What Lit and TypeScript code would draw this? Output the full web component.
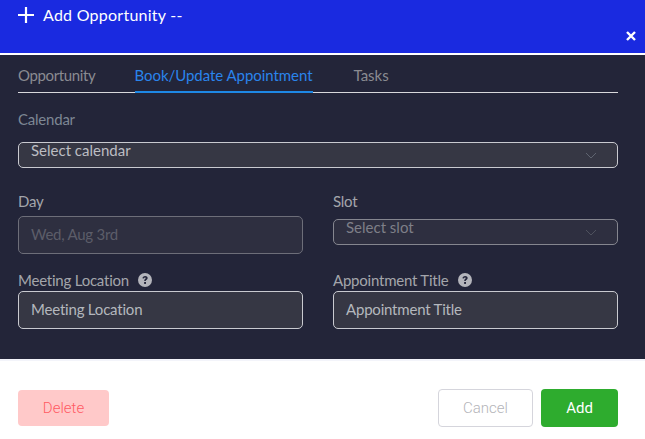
import { LitElement, html, css } from 'lit';
import { customElement } from 'lit/decorators.js';

const chevron = html`<svg class="chevron" width="12" height="7" viewBox="0 0 12 7" fill="none"><path d="M1 1l5 5 5-5" stroke="currentColor" stroke-width="1"/></svg>`;

const help = html`<svg class="help" width="14" height="14" viewBox="0 0 14 14"><circle cx="7" cy="7" r="7" fill="#b4b5bb"/><path d="M4.4 5.3c.1-1.5 1.2-2.4 2.7-2.4 1.5 0 2.6.9 2.6 2.1 0 1.7-2 1.7-2 3.1H6.2c0-2.1 1.6-2 1.6-3 0-.4-.3-.7-.8-.7-.6 0-.9.4-1 1z" fill="#232539"/><rect x="6.1" y="9" width="1.9" height="1.9" fill="#232539"/></svg>`;

@customElement('app-root')
export class AppRoot extends LitElement {
  static styles = css`
    :host {
      display: block;
      width: 645px;
      height: 439px;
      overflow: hidden;
      background: #ffffff;
      font-family: 'Lato', 'Liberation Sans', sans-serif;
      font-size: 15px;
    }

    .header {
      height: 53px;
      box-sizing: border-box;
      background: #1a2ae0;
      padding: 4px 9px 0 18px;
      display: flex;
      justify-content: space-between;
      color: #ffffff;
    }

    .title {
      display: flex;
      align-items: center;
      gap: 9px;
      height: 22px;
      font-size: 16px;
      letter-spacing: 0.25px;
    }

    .title span {
      margin-bottom: 2px;
    }

    .close {
      align-self: flex-end;
      margin-bottom: 12px;
      display: block;
    }

    .body {
      margin-top: 2px;
      height: 304px;
      box-sizing: border-box;
      background: #232539;
      padding: 0 27px 0 18px;
    }

    .tabs {
      display: flex;
      gap: 39px;
      height: 38px;
      border-bottom: 1px solid #d8d8dc;
      box-sizing: border-box;
      color: #8a8b91;
    }

    .tab {
      line-height: 40px;
      height: 38px;
      box-sizing: border-box;
      letter-spacing: -0.36px;
    }

    .tab.active {
      color: #2a84ec;
      border-bottom: 2px solid #1e88e5;
      letter-spacing: -0.05px;
      margin-right: 2px;
    }

    .tab.plain {
      letter-spacing: 0;
    }

    .label {
      color: #a3a5ab;
      line-height: 18px;
      display: flex;
      align-items: center;
      gap: 9px;
      letter-spacing: -0.22px;
    }

    .calendar-label {
      color: #7d8794;
      margin-top: 17px;
    }

    .select {
      height: 26px;
      box-sizing: border-box;
      border: 1px solid #c9cad0;
      border-radius: 5px;
      background: #363744;
      color: #bcbdc2;
      padding: 0 20px 0 12px;
      display: flex;
      justify-content: space-between;
      line-height: 14px;
    }

    .select.full {
      margin-top: 14px;
    }

    .chevron {
      color: #5f6470;
      margin-top: 9px;
    }

    .grid {
      display: grid;
      grid-template-columns: 285px 285px;
      column-gap: 30px;
      margin-top: 24px;
    }

    .field-top {
      height: 65px;
    }

    .field-top .label {
      margin-bottom: 6px;
    }

    .select.slot {
      margin-top: 9px;
      background: #2e2f40;
      border-color: #85868f;
      color: #7e7f88;
    }

    .select.slot .chevron {
      color: #4e515d;
    }

    .input {
      height: 38px;
      box-sizing: border-box;
      border-radius: 5px;
      border: 1px solid #c9cad0;
      background: #363744;
      color: #b4b7bd;
      padding: 0 12px;
      line-height: 35px;
      letter-spacing: -0.2px;
    }

    .input.disabled {
      background: #2e2f40;
      border-color: #6d6e79;
      color: #5c5d69;
      letter-spacing: -0.25px;
    }

    .field-bottom {
      margin-top: 14px;
    }

    .field-bottom .label {
      margin-bottom: 2px;
    }

    .footer {
      display: flex;
      align-items: center;
      justify-content: space-between;
      border-top: 2px solid #f3f4fa;
      padding: 28px 27px 0 18px;
      font-family: 'Roboto', 'Liberation Sans', sans-serif;
      font-size: 15px;
    }

    .actions {
      display: flex;
      gap: 8px;
    }

    .btn {
      height: 38px;
      box-sizing: border-box;
      border-radius: 4px;
      display: flex;
      align-items: center;
      justify-content: center;
    }

    .delete {
      width: 91px;
      height: 36px;
      background: #ffc9c9;
      color: #ff5a63;
      font-weight: 300;
    }

    .cancel {
      width: 95px;
      background: #ffffff;
      border: 1px solid #d5d5dc;
      color: #b4b4b9;
      font-weight: 300;
    }

    .add {
      width: 77px;
      background: #2eac2e;
      color: #ffffff;
    }
  `;

  render() {
    return html`
      <div class="header">
        <div class="title">
          <svg width="16" height="16" viewBox="0 0 16 16"><path d="M8 0v16M0 8h16" stroke="#fff" stroke-width="2.2"/></svg>
          <span>Add Opportunity --</span>
        </div>
        <svg class="close" width="10" height="10" viewBox="0 0 10 10"><path d="M1 1l8 8M9 1l-8 8" stroke="#fff" stroke-width="2.4"/></svg>
      </div>
      <div class="body">
        <div class="tabs">
          <div class="tab">Opportunity</div>
          <div class="tab active">Book/Update Appointment</div>
          <div class="tab plain">Tasks</div>
        </div>
        <div class="label calendar-label">Calendar</div>
        <div class="select full"><span>Select calendar</span>${chevron}</div>
        <div class="grid">
          <div class="field-top">
            <div class="label">Day</div>
            <div class="input disabled">Wed, Aug 3rd</div>
          </div>
          <div class="field-top">
            <div class="label">Slot</div>
            <div class="select slot"><span>Select slot</span>${chevron}</div>
          </div>
          <div class="field-bottom">
            <div class="label">Meeting Location ${help}</div>
            <div class="input">Meeting Location</div>
          </div>
          <div class="field-bottom">
            <div class="label">Appointment Title ${help}</div>
            <div class="input">Appointment Title</div>
          </div>
        </div>
      </div>
      <div class="footer">
        <div class="btn delete">Delete</div>
        <div class="actions">
          <div class="btn cancel">Cancel</div>
          <div class="btn add">Add</div>
        </div>
      </div>
    `;
  }
}
